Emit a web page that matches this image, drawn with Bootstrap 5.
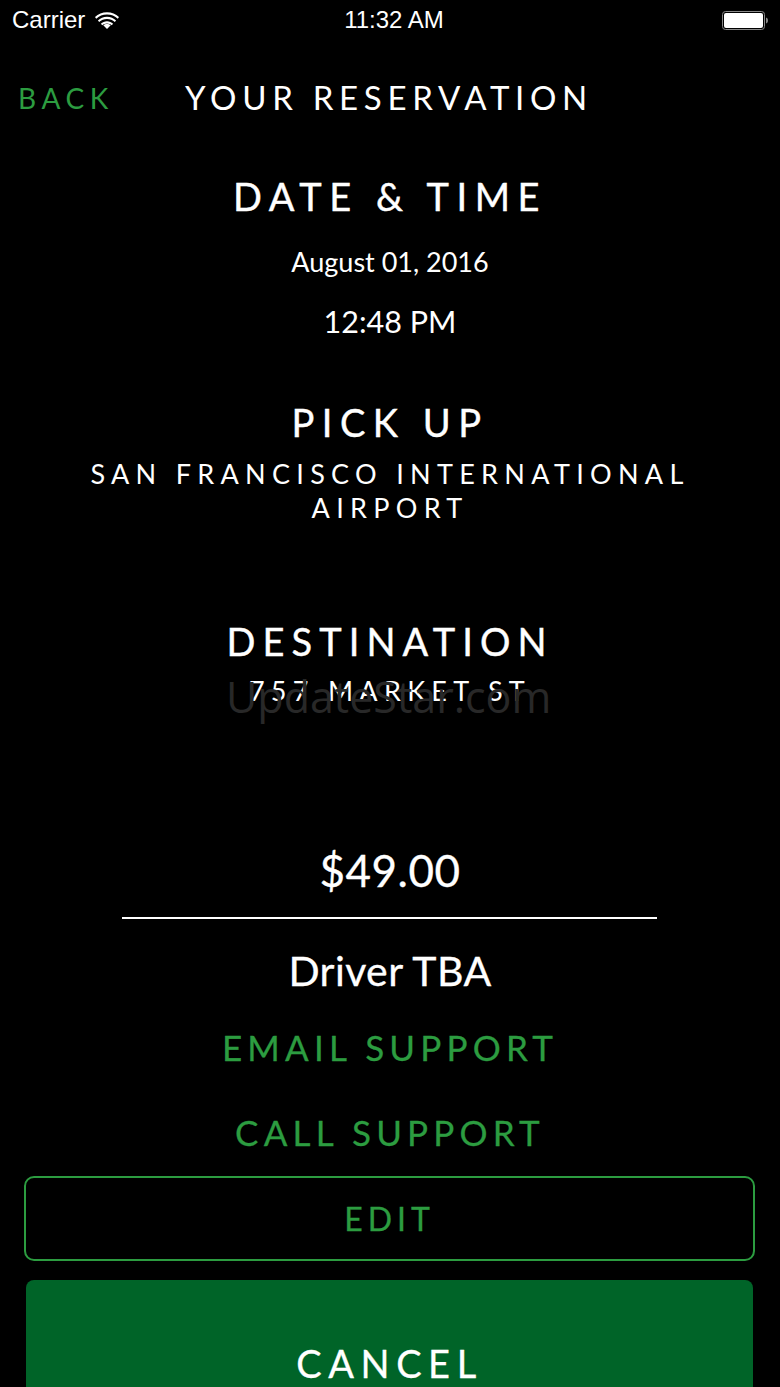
<!DOCTYPE html>
<html lang="en">
<head>
<meta charset="UTF-8" />
<meta name="viewport" content="width=device-width, initial-scale=1.0" />
<title>Your Reservation</title>
<link href="https://cdn.jsdelivr.net/npm/bootstrap@5.3.0/dist/css/bootstrap.min.css" rel="stylesheet" />
<style>
	html, body { height: 1387px; overflow: hidden; background: #000; }
	body { font-family: Lato, "Liberation Sans", sans-serif; color: #fff; }
	.screen { position: relative; height: 1387px; overflow: hidden; }
	.status-bar { height: 40px; padding: 0 12px; font-family: "Liberation Sans", sans-serif; font-size: 24px; }
	.status-side { width: 200px; }
	.carrier { margin-right: 10px; }
	.clock { margin-left: 8px; }
	.head-row { height: 60px; margin-top: 28px; }
	.back-link { width: 185px; padding-left: 18px; color: #2c9c40; font-size: 28px; letter-spacing: 5.600px; text-decoration: none; }
	.page-title { font-size: 33px; letter-spacing: 5.700px; margin: 0; font-weight: 400; }
	.sec-title { height: 50px; line-height: 50px; font-size: 38px; font-weight: 400; letter-spacing: 7.500px; margin: 0; -webkit-text-stroke: 0.4px #fff; }
	.t-date { margin-top: 43px; }
	.t-pick { margin-top: 56px; }
	.t-dest { margin-top: 91px; letter-spacing: 7.100px; }
	.val { height: 40px; line-height: 40px; margin: 0; font-size: 27px; }
	.val-date { margin-top: 21px; }
	.val-time { margin-top: 19px; font-size: 30.500px; }
	.addr { line-height: 34px; font-size: 27px; letter-spacing: 6.300px; margin: 0; }
	.addr-pick { margin-top: 10px; }
	.addr-dest { margin-top: 8px; height: 34px; }
	.price { height: 60px; line-height: 58px; margin: 133px 0 0; font-size: 44px; letter-spacing: 0.500px; -webkit-text-stroke: 0.3px #fff; }
	.rule-line { width: 535px; height: 2px; margin: 16px 0 0 122px; background: #fff; opacity: 1; border: 0; }
	.driver { height: 50px; line-height: 50px; margin: 27px 0 0; font-size: 41px; letter-spacing: 0.400px; -webkit-text-stroke: 0.3px #fff; }
	.support { display: block; height: 40px; line-height: 40px; color: #2c9c40; font-size: 35px; letter-spacing: 5.200px; text-decoration: none; -webkit-text-stroke: 0.3px #2c9c40; }
	.s-email { margin-top: 31px; }
	.s-call { margin-top: 45px; }
	.btn-edit { display: block; width: 731px; height: 85px; line-height: 81px; margin: 24px 0 0 24px; padding: 0; border: 2px solid #2c9c40; border-radius: 10px; background: transparent; color: #2c9c40; font-size: 32px; letter-spacing: 5px; -webkit-text-stroke: 0.3px #2c9c40; }
	.btn-cancel { display: block; width: 727px; height: 166px; margin: 19px 0 0 26px; padding: 0; border: 0; border-radius: 8px; background: #006428; color: #fff; font-size: 38px; letter-spacing: 6.600px; -webkit-text-stroke: 0.3px #fff; }
	.watermark { position: absolute; left: 226px; top: 667px; font-family: "Open Sans", sans-serif; font-size: 43px; line-height: 60px; color: #282828; pointer-events: none; }
</style>
</head>
<body>
<div class="screen">
	<div class="status-bar d-flex align-items-center justify-content-between">
		<div class="status-side d-flex align-items-center">
			<span class="carrier">Carrier</span>
			<svg width="24" height="18" viewBox="0 0 24 18" fill="#fff">
				<path d="M12 3.500c4.200 0 8 1.600 10.800 4.200l1.200-1.600C20.800 3.100 16.600 1.200 12 1.200S3.200 3.100 0 6.100l1.200 1.600C4 5.100 7.800 3.500 12 3.500z"/>
				<path d="M12 8c3 0 5.800 1.200 7.800 3.100l1.300-1.600C18.700 7.200 15.500 5.800 12 5.800S5.300 7.200 2.900 9.500l1.300 1.600C6.200 9.200 9 8 12 8z"/>
				<path d="M12 12.400c1.800 0 3.500.7 4.800 1.900l1.300-1.600c-1.600-1.500-3.800-2.500-6.100-2.500s-4.500 1-6.100 2.500l1.300 1.600c1.300-1.200 3-1.900 4.800-1.900z"/>
				<path d="M12 18l3.700-3.700c-1-.7-2.300-1.200-3.700-1.200s-2.700.5-3.700 1.200z"/>
			</svg>
		</div>
		<div class="clock">11:32 AM</div>
		<div class="status-side d-flex justify-content-end">
			<svg width="46" height="19" viewBox="0 0 46 19">
				<rect x="0.500" y="0.500" width="42" height="18" rx="3" fill="none" stroke="#888"/>
				<rect x="2" y="2" width="39" height="15" rx="2" fill="#fff"/>
				<path d="M44 6.500c1.300.3 2 1.500 2 3s-.7 2.700-2 3z" fill="#888"/>
			</svg>
		</div>
	</div>

	<div class="head-row d-flex align-items-center">
		<a class="back-link" href="#">BACK</a>
		<h1 class="page-title">YOUR RESERVATION</h1>
	</div>

	<div class="text-center">
		<h2 class="sec-title t-date">DATE &amp; TIME</h2>
		<p class="val val-date">August 01, 2016</p>
		<p class="val val-time">12:48 PM</p>

		<h2 class="sec-title t-pick">PICK UP</h2>
		<p class="addr addr-pick">SAN FRANCISCO INTERNATIONAL<br />AIRPORT</p>

		<h2 class="sec-title t-dest">DESTINATION</h2>
		<p class="addr addr-dest">757 MARKET ST</p>

		<p class="price">$49.00</p>
	</div>
	<hr class="rule-line" />
	<div class="text-center">
		<p class="driver">Driver TBA</p>
		<a class="support s-email" href="#">EMAIL SUPPORT</a>
		<a class="support s-call" href="#">CALL SUPPORT</a>
	</div>
	<button class="btn btn-edit" type="button">EDIT</button>
	<button class="btn btn-cancel" type="button">CANCEL</button>

	<div class="watermark">UpdateStar.com</div>
</div>
<script src="https://cdn.jsdelivr.net/npm/bootstrap@5.3.0/dist/js/bootstrap.bundle.min.js"></script>
</body>
</html>
